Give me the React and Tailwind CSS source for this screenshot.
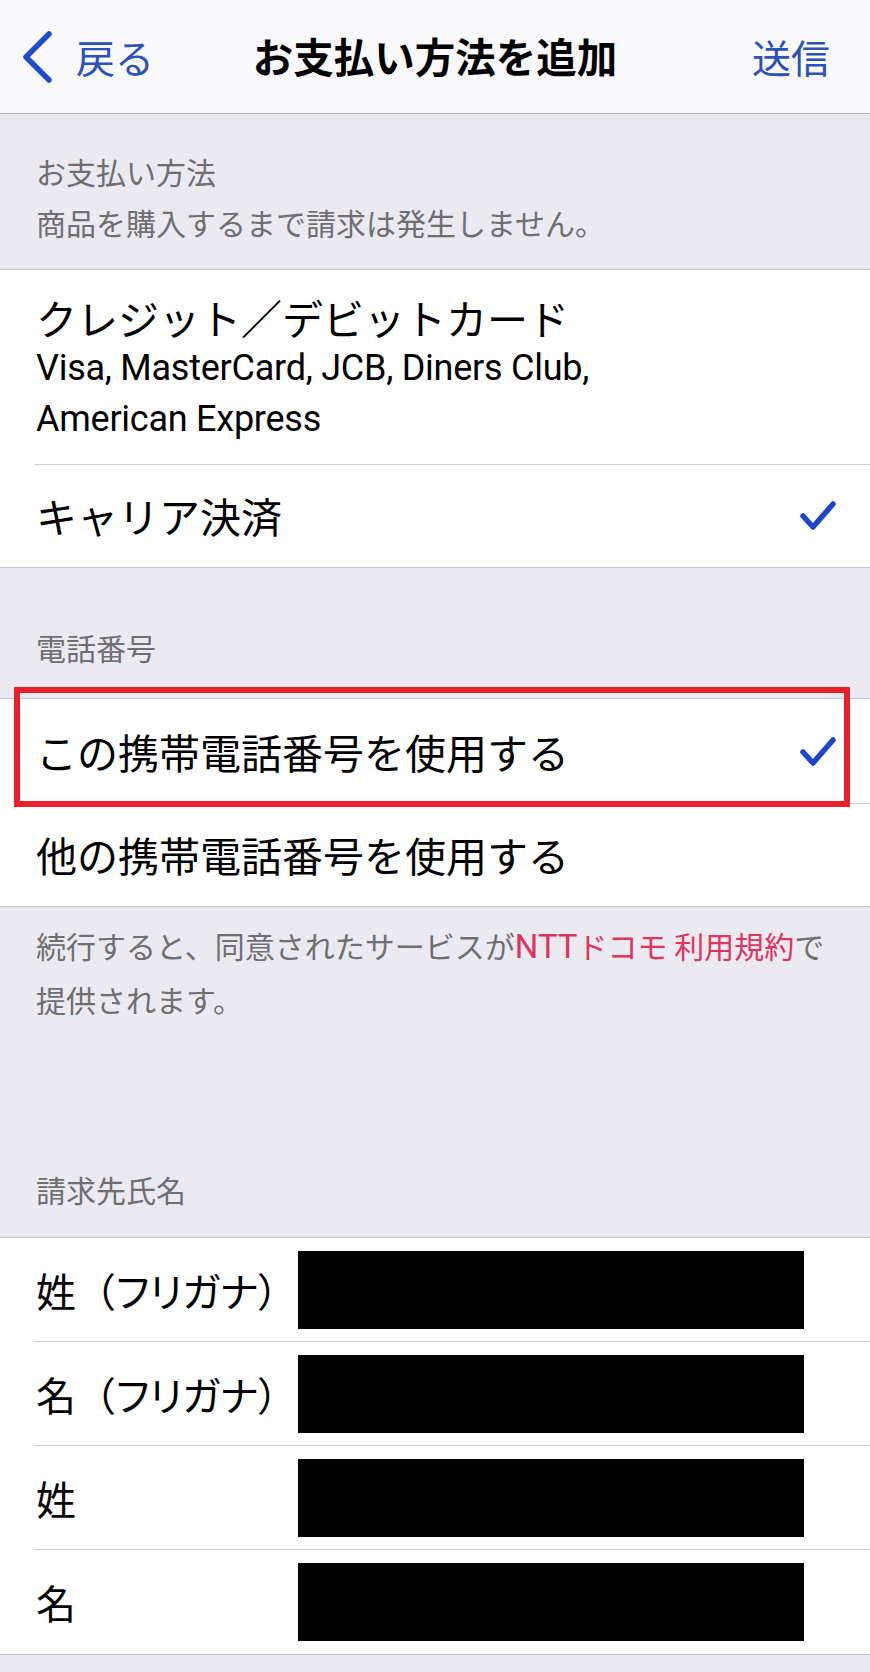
import React from "react";

const JP = { fontFamily: '"Noto Sans CJK JP", "Noto Sans", sans-serif' };
const LAT = { fontFamily: 'Roboto, "Noto Sans CJK JP", sans-serif' };

function Check() {
  return (
    <svg width="36" height="30" viewBox="0 0 36 30" fill="none">
      <polyline points="3,15 13,26 33,3" stroke="#1f45c9" strokeWidth="5.5" strokeLinecap="round" strokeLinejoin="round" />
    </svg>
  );
}

function Chevron() {
  return (
    <svg width="34" height="52" viewBox="0 0 34 52" fill="none">
      <polyline points="29,3 6,26 29,49" stroke="#1f4ad0" strokeWidth="5.5" strokeLinecap="round" strokeLinejoin="round" />
    </svg>
  );
}

function NameRow({ head, tail, last }) {
  return (
    <div className="flex items-center h-[104px] relative">
      <div className="w-[298px] shrink-0 pl-[36px] text-[40px] text-black whitespace-nowrap">
        {head}
        {tail && <span className="[font-feature-settings:'palt']">{tail}</span>}
      </div>
      <div className="w-[506px] h-[78px] bg-black" />
      {!last && <div className="absolute left-[34px] right-0 bottom-0 h-px bg-[#d0d0d4]" />}
    </div>
  );
}

export default function App() {
  return (
    <div className="w-full min-h-[1672px] bg-[#ebeaf0]" style={JP}>
      {/* Nav bar */}
      <div className="h-[114px] bg-[#f9f9fb] border-b border-[#b5b5ba] grid grid-cols-[1fr_auto_1fr] items-center">
        <div className="flex items-center pl-[20px] gap-[22px] text-[#2a52b8] text-[39px]">
          <Chevron />
          <span className="leading-none">戻る</span>
        </div>
        <div className="text-[40.5px] font-bold text-black leading-none">お支払い方法を追加</div>
        <div className="flex justify-end pr-[40px] text-[#2a52b8] text-[39px] leading-none">送信</div>
      </div>

      {/* Section header */}
      <div className="pt-[32px] pb-[21px] pl-[36px] text-[#6e6e73] text-[30px] leading-[51px]">
        <div>お支払い方法</div>
        <div>商品を購入するまで請求は発生しません。</div>
      </div>

      {/* Payment methods */}
      <div className="bg-white border-t border-b border-[#c8c7cc]">
        <div className="pt-[21px] pb-[20px] pl-[36px] relative">
          <div className="text-[41px] leading-[52px] text-black">クレジット／デビットカード</div>
          <div className="text-[36px] leading-[51px] text-black tracking-[-0.25px]" style={LAT}>Visa, MasterCard, JCB, Diners Club,</div>
          <div className="text-[36px] leading-[51px] text-black tracking-[-0.25px]" style={LAT}>American Express</div>
          <div className="absolute left-[34px] right-0 bottom-0 h-px bg-[#d0d0d4]" />
        </div>
        <div className="h-[102px] flex items-center justify-between pl-[36px] pr-[34px]">
          <span className="text-[41px] text-black">キャリア決済</span>
          <Check />
        </div>
      </div>

      {/* Phone header */}
      <div className="pt-[54px] pb-[25px] pl-[36px] text-[#6e6e73] text-[30px] leading-[51px]">電話番号</div>

      {/* Phone options */}
      <div className="bg-white border-t border-b border-[#c8c7cc]">
        <div className="h-[105px] flex items-center justify-between pl-[36px] pr-[34px] relative">
          <span className="text-[41px] text-black">この携帯電話番号を使用する</span>
          <Check />
          <div className="absolute left-[34px] right-0 bottom-0 h-px bg-[#d0d0d4]" />
          <div className="absolute left-[14px] right-[20px] top-[-12px] bottom-[-3px] border-[6px] border-[#e8202b]" />
        </div>
        <div className="h-[102px] flex items-center pl-[36px]">
          <span className="text-[41px] text-black">他の携帯電話番号を使用する</span>
        </div>
      </div>

      {/* Footer note */}
      <div className="pt-[12px] pl-[36px] text-[#6e6e73] text-[30px] leading-[52px]">
        <div className="whitespace-nowrap">
          続行すると、同意されたサービスが<span className="text-[#e0335e]"><span className="text-[33px]" style={LAT}>NTT</span>ドコモ 利用規約</span>で
        </div>
        <div>提供されます。</div>
      </div>

      {/* Billing name header */}
      <div className="pt-[139px] pb-[22px] pl-[36px] text-[#6e6e73] text-[30px] leading-[51px]">請求先氏名</div>

      {/* Name rows */}
      <div className="bg-white border-t border-b border-[#c8c7cc]">
        <NameRow head="姓（" tail="フリガナ）" />
        <NameRow head="名（" tail="フリガナ）" />
        <NameRow head="姓" />
        <NameRow head="名" last />
      </div>
    </div>
  );
}
